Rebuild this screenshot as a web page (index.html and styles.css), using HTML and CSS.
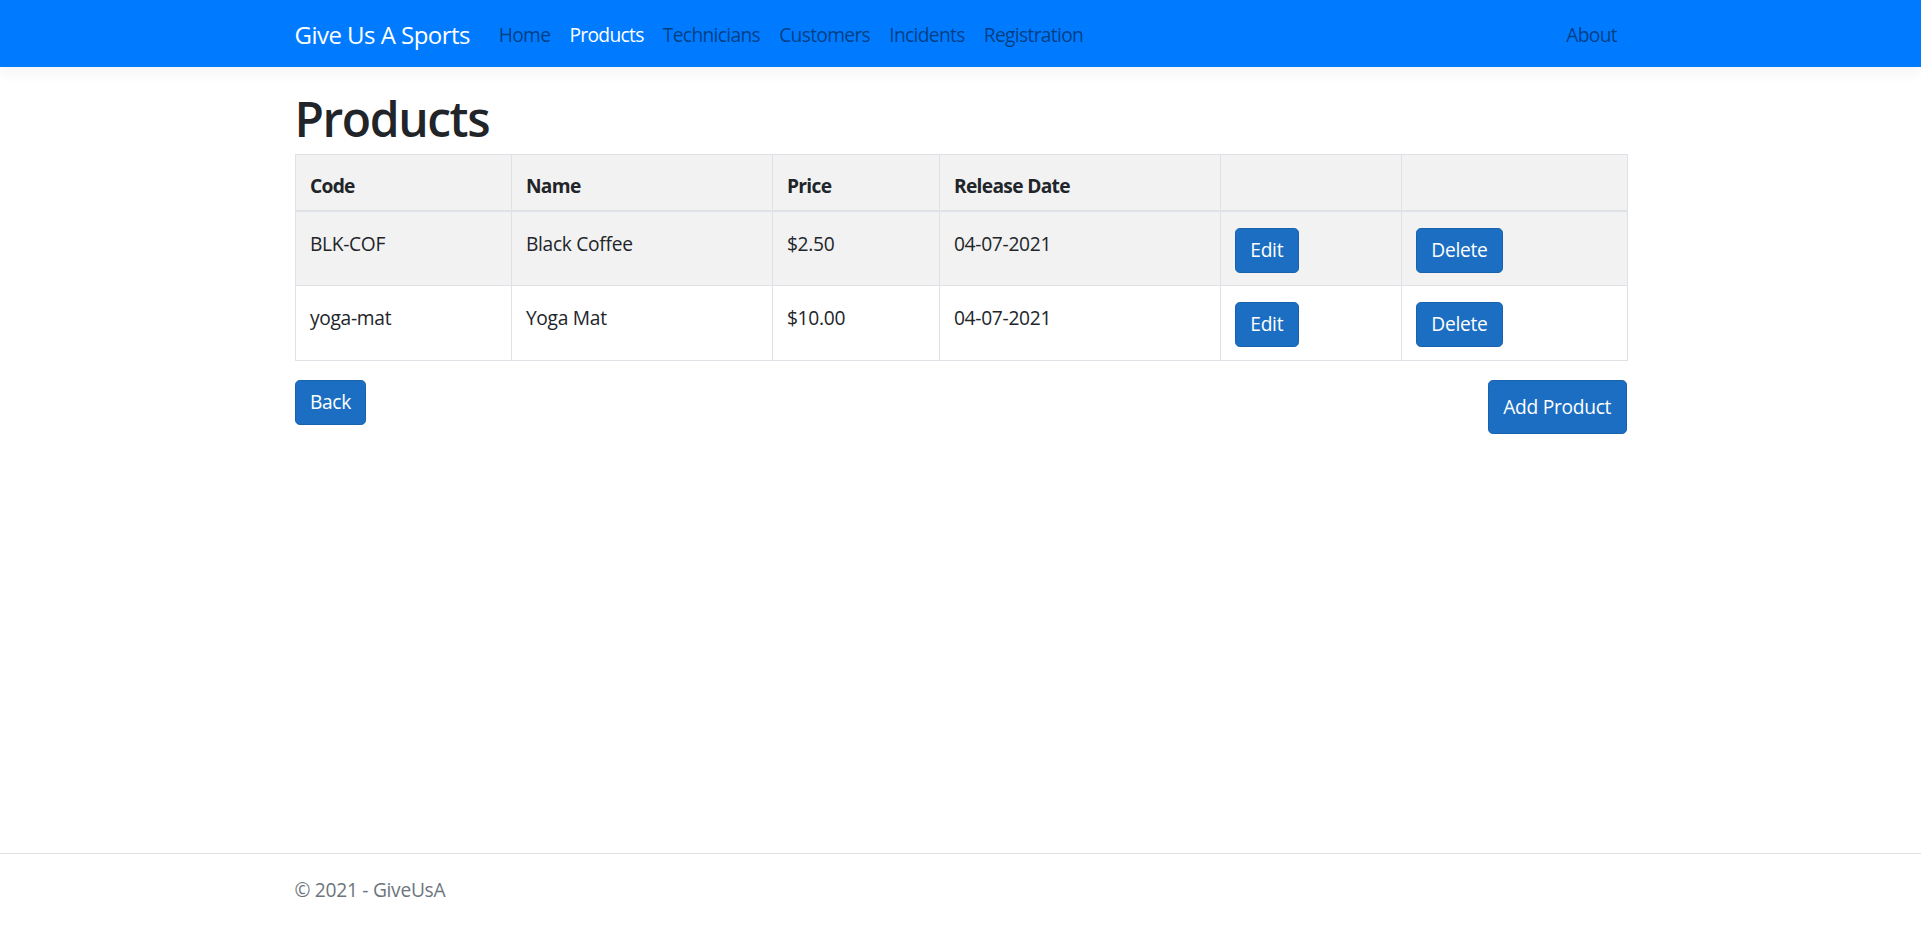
FILE: index.html
```html
<!DOCTYPE html>
<html lang="en">
<head>
<meta charset="utf-8">
<title>Products - GiveUsA</title>
<link rel="stylesheet" href="styles.css">
</head>
<body>
<header>
  <nav class="navbar">
    <div class="container nav-inner">
      <a class="brand" href="#">Give Us A Sports</a>
      <ul class="nav-list">
        <li><a class="nav-link" href="#">Home</a></li>
        <li><a class="nav-link active" href="#">Products</a></li>
        <li><a class="nav-link" href="#">Technicians</a></li>
        <li><a class="nav-link" href="#">Customers</a></li>
        <li><a class="nav-link" href="#">Incidents</a></li>
        <li><a class="nav-link" href="#">Registration</a></li>
      </ul>
      <ul class="nav-list nav-right">
        <li><a class="nav-link" href="#">About</a></li>
      </ul>
    </div>
  </nav>
</header>
<div class="container page">
  <main>
    <h1 class="title">Products</h1>
    <table class="grid">
      <colgroup>
        <col class="c-code">
        <col class="c-name">
        <col class="c-price">
        <col class="c-date">
        <col class="c-edit">
        <col class="c-del">
      </colgroup>
      <thead>
        <tr>
          <th>Code</th>
          <th>Name</th>
          <th>Price</th>
          <th>Release Date</th>
          <th></th>
          <th></th>
        </tr>
      </thead>
      <tbody>
        <tr class="odd">
          <td>BLK-COF</td>
          <td>Black Coffee</td>
          <td>$2.50</td>
          <td>04-07-2021</td>
          <td><a class="btn cell-btn" href="#">Edit</a></td>
          <td><a class="btn cell-btn" href="#">Delete</a></td>
        </tr>
        <tr>
          <td>yoga-mat</td>
          <td>Yoga Mat</td>
          <td>$10.00</td>
          <td>04-07-2021</td>
          <td><a class="btn cell-btn" href="#">Edit</a></td>
          <td><a class="btn cell-btn" href="#">Delete</a></td>
        </tr>
      </tbody>
    </table>
    <div class="actions">
      <a class="btn" href="#">Back</a>
      <a class="btn btn-add" href="#">Add Product</a>
    </div>
  </main>
</div>
<footer class="footer">
  <div class="container">&copy; 2021 - GiveUsA</div>
</footer>
</body>
</html>
```
FILE: styles.css
```css
* { box-sizing: border-box; }

html, body {
  margin: 0;
  padding: 0;
}

body {
  font-family: "Open Sans", "Liberation Sans", sans-serif;
  font-size: 19.2px;
  line-height: 1.5;
  color: #212529;
  background: #fff;
  min-height: 100vh;
  display: flex;
  flex-direction: column;
  letter-spacing: -0.015em;
}

a { text-decoration: none; }

.container {
  width: 1332px;
  margin: 0 auto;
}

/* Navbar */
.navbar {
  background: #007bff;
  padding: 9.6px 0;
  box-shadow: 0 4.8px 14.4px rgba(0, 0, 0, 0.05);
  margin-bottom: 19.2px;
}

.nav-inner {
  display: flex;
  align-items: center;
}

.brand {
  color: #fff;
  font-size: 24px;
  line-height: 36px;
  padding: 7.2px 0 4.8px;
  margin-right: 19.2px;
  white-space: nowrap;
  letter-spacing: -0.022em;
}

.nav-list {
  list-style: none;
  margin: 0;
  padding: 0;
  display: flex;
}

.nav-right { margin-left: auto; }

.nav-link {
  display: block;
  padding: 11.4px 9.6px 7.8px;
  line-height: 28.8px;
  color: rgba(0, 0, 0, 0.5);
  letter-spacing: -0.035em;
}

.nav-link.active { color: #fff; }

/* Page */
.page { flex: 1; }

.title {
  font-size: 48px;
  font-weight: 600;
  line-height: 1.2;
  margin: 3.6px 0 6px;
  letter-spacing: -0.03em;
}

.grid {
  width: 1332px;
  table-layout: fixed;
  border-collapse: collapse;
  margin-bottom: 19.2px;
  border: 1px solid #dee2e6;
}

.c-code { width: 216px; }
.c-name { width: 261px; }
.c-price { width: 167px; }
.c-date { width: 281px; }
.c-edit { width: 181px; }
.c-del { width: 226px; }

.grid th,
.grid td {
  border: 1px solid #dee2e6;
  vertical-align: top;
  text-align: left;
  padding: 18px 14.4px 12.9px;
}

.grid th {
  font-weight: 700;
  padding: 17px 14.4px 9.4px;
  border-bottom: 2px solid #dee2e6;
  background: #f2f2f2;
  letter-spacing: -0.035em;
}

.grid tr.odd td { background: #f2f2f2; }

.btn {
  display: inline-block;
  color: #fff;
  background: #1b6ec2;
  border: 1px solid #1861ac;
  border-radius: 4.8px;
  padding: 7px 14.4px;
  line-height: 28.8px;
  font-size: 19.2px;
  white-space: nowrap;
}

.cell-btn { margin-top: -2px; vertical-align: top; }

.actions {
  display: flex;
  justify-content: space-between;
  align-items: flex-start;
}

.btn-add { padding: 11.7px 14.4px; }

/* Footer */
.footer {
  border-top: 1px solid #dee2e6;
  line-height: 72px;
  color: #6c757d;
  white-space: nowrap;
}
```
